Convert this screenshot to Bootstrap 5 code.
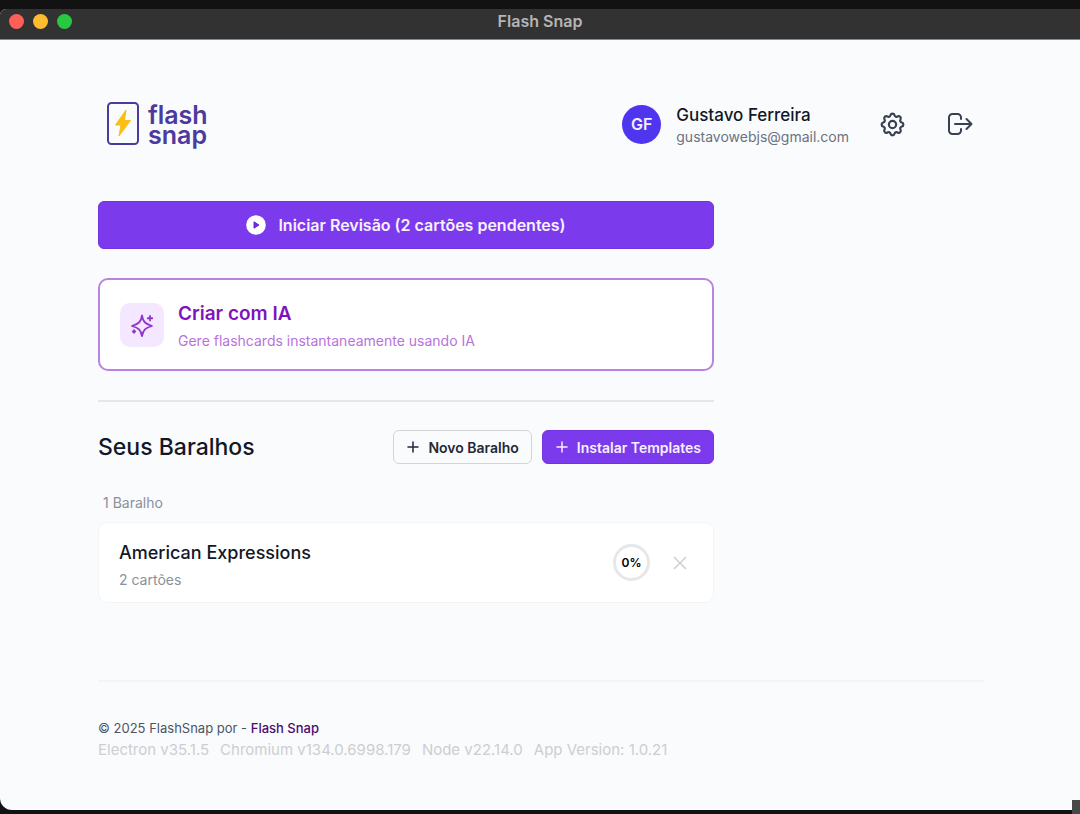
<!DOCTYPE html>
<html lang="pt-BR">
<head>
<meta charset="utf-8">
<meta name="viewport" content="width=device-width, initial-scale=1">
<title>Flash Snap</title>
<link href="https://cdn.jsdelivr.net/npm/bootstrap@5.3.0/dist/css/bootstrap.min.css" rel="stylesheet">
<style>
  :root { --violet: #7c3aed; --ink: #111827; }
  body { font-family: Inter, "Liberation Sans", sans-serif; font-size: 14px; line-height: 22px; color: var(--ink); background: #121212; }
  svg { display: block; flex: none; }
  .app-window { margin: 9px 0 4px; min-height: calc(100vh - 13px); background: #fafbfd; border-radius: 6px 0 0 12px; overflow: hidden; }
  .title-bar { height: 31px; background: #323232; border-bottom: 1px solid #8a8a8a; color: #b5b5b5; padding: 0 9px; display: grid; grid-template-columns: 1fr auto 1fr; align-items: center; }
  .title-text { font-size: 16px; font-weight: 600; line-height: 20px; padding-bottom: 6px; }
  .lights { gap: 9px; padding-bottom: 5px; }
  .light { width: 15px; height: 15px; border-radius: 50%; }
  .light-red { background: #ff5f57; } .light-amber { background: #febc2e; } .light-green { background: #28c840; }
  .desktop-corner { position: fixed; right: 0; bottom: 0; width: 8px; height: 14px; background: #484848; }
  .page { padding: 51px 96px 49px 98px; }
  .top-bar { height: 66px; padding: 0 4px 0 9px; }
  .brand { color: #4c3a9e; gap: 9px; text-decoration: none; }
  .brand-text { font-size: 25px; font-weight: 600; line-height: 20px; padding-top: 2px; }
  .avatar { width: 39px; height: 39px; background: #4f35f0; color: #f3efff; font-size: 16px; font-weight: 600; }
  .user-info { margin-left: 15px; padding-top: 4px; }
  .user-name { font-size: 17px; font-weight: 500; }
  .muted { color: #6b7280; }
  .icon-btn { width: 41px; height: 41px; border: 0; background: none; padding: 0; color: #374151; display: flex; align-items: center; justify-content: center; }
  .actions { margin-left: 23px; gap: 26px; }
  .main-col { max-width: 616px; margin-top: 44px; }
  .btn-violet { --bs-btn-bg: var(--violet); --bs-btn-color: #f7f0ff; --bs-btn-border-color: #7433dc; --bs-btn-hover-bg: #6d28d9; --bs-btn-hover-color: #fff; --bs-btn-active-bg: #6d28d9; --bs-btn-active-color: #fff; }
  .btn-start { height: 48px; font-size: 16px; font-weight: 600; gap: 12px; border-radius: 6px; }
  .ai-card { margin-top: 29px; width: 100%; height: 93px; background: #fff; border: 2px solid #b983e3; border-radius: 10px; padding: 0 20px; gap: 14px; text-align: left; }
  .ai-icon { width: 44px; height: 44px; border-radius: 10px; background: #f3e8ff; color: #9333ce; }
  .ai-text { padding-top: 4px; }
  .ai-title { font-size: 19px; font-weight: 600; line-height: 26px; color: #7e14bd; }
  .ai-sub { color: #b873da; margin-top: 3px; }
  .rule { border: 0; border-top: 2px solid #e5e7eb; opacity: 1; margin: 29px 0 28px; }
  .section-title { font-size: 23px; font-weight: 500; line-height: 34px; margin: 0; }
  .deck-actions { gap: 10px; }
  .btn-deck { height: 34px; padding: 0 12px; font-size: 14px; font-weight: 600; gap: 8px; border-radius: 6px; }
  .btn-plain { --bs-btn-color: #1f2937; --bs-btn-border-color: #d1d5db; --bs-btn-hover-bg: #f3f4f6; --bs-btn-hover-color: #1f2937; --bs-btn-hover-border-color: #d1d5db; }
  .deck-count { color: #8b909b; margin: 28px 0 8px 5px; }
  .deck { height: 81px; background: #fff; border: 1px solid #f3f4f6; border-radius: 9px; padding: 0 19px 0 20px; }
  .deck-text { padding-top: 6px; }
  .deck-name { font-size: 18px; font-weight: 500; line-height: 26px; margin: 0; }
  .deck-cards { color: #8b909b; margin-top: 3px; }
  .ring { width: 37px; height: 37px; border: 3px solid #e5e7eb; color: #000; font-size: 12px; font-weight: 600; }
  .deck-close { width: 29px; height: 29px; color: #cdd0d5; margin-left: 15px; }
  .page-foot { margin-top: 77px; border-top: 2px solid #f3f4f6; padding-top: 35px; }
  .copyright { font-size: 13px; color: #4b5563; }
  .copyright a { color: #4a0d70; font-weight: 500; text-decoration: none; }
  .versions { font-size: 15px; color: #cdced1; gap: 0 11px; }
</style>
</head>
<body>
<div class="app-window">
  <header class="title-bar">
    <div class="lights d-flex"><span class="light light-red"></span><span class="light light-amber"></span><span class="light light-green"></span></div>
    <div class="title-text">Flash Snap</div>
  </header>
  <div class="page">
    <nav class="top-bar d-flex align-items-center justify-content-between">
      <a href="#" class="brand d-flex align-items-center">
        <svg width="32" height="44" viewBox="0 0 32 44"><rect x="1" y="1" width="30" height="41" rx="3.500" fill="none" stroke="#4c3a9e" stroke-width="2"/><path d="M19 8 8.500 23H14l-2 11L23.500 18.500H17.500Z" fill="#fbbf15" stroke="#fbbf15" stroke-linejoin="round"/></svg>
        <span class="brand-text">flash<br>snap</span>
      </a>
      <div class="d-flex align-items-center">
        <div class="avatar rounded-circle d-flex align-items-center justify-content-center">GF</div>
        <div class="user-info">
          <div class="user-name">Gustavo Ferreira</div>
          <div class="muted">gustavowebjs@gmail.com</div>
        </div>
        <div class="actions d-flex">
          <button class="icon-btn" type="button" aria-label="Configurações">
            <svg width="29" height="29" viewBox="0 0 24 24" fill="none" stroke="currentColor" stroke-width="1.800" stroke-linejoin="round"><path d="M10.325 4.317c.426-1.756 2.924-1.756 3.350 0a1.724 1.724 0 0 0 2.573 1.066c1.543-.940 3.310.826 2.370 2.370a1.724 1.724 0 0 0 1.065 2.572c1.756.426 1.756 2.924 0 3.350a1.724 1.724 0 0 0-1.066 2.573c.940 1.543-.826 3.310-2.370 2.370a1.724 1.724 0 0 0-2.572 1.065c-.426 1.756-2.924 1.756-3.350 0a1.724 1.724 0 0 0-2.573-1.066c-1.543.940-3.310-.826-2.370-2.370a1.724 1.724 0 0 0-1.065-2.572c-1.756-.426-1.756-2.924 0-3.350a1.724 1.724 0 0 0 1.066-2.573c-.940-1.543.826-3.310 2.370-2.370 1 .608 2.296.070 2.572-1.065z"/><circle cx="12" cy="12" r="3"/></svg>
          </button>
          <button class="icon-btn" type="button" aria-label="Sair">
            <svg width="26" height="24" viewBox="0 0 26 24" fill="none" stroke="currentColor" stroke-width="2" stroke-linecap="round" stroke-linejoin="round"><path d="M14 7V5.500A3.500 3.500 0 0 0 10.500 2h-5A3.500 3.500 0 0 0 2 5.500v13A3.500 3.500 0 0 0 5.500 22h5a3.500 3.500 0 0 0 3.500-3.500V17M8 12h16.500M19.500 7l5 5-5 5"/></svg>
          </button>
        </div>
      </div>
    </nav>

    <main class="main-col">
      <button type="button" class="btn btn-violet btn-start w-100 d-flex align-items-center justify-content-center">
        <svg width="20" height="20" viewBox="0 0 20 20"><circle cx="10" cy="10" r="9.800" fill="#fff"/><path d="M8 6.800v6.400l5-3.200z" fill="#6d28d9" stroke="#6d28d9" stroke-linejoin="round"/></svg>
        <span>Iniciar Revisão (2 cartões pendentes)</span>
      </button>

      <button type="button" class="ai-card d-flex align-items-center">
        <span class="ai-icon d-flex align-items-center justify-content-center">
          <svg width="26" height="26" viewBox="0 0 26 26" fill="none" stroke="currentColor" stroke-width="1.800" stroke-linecap="round" stroke-linejoin="round"><path d="M13 3.500C14 10 16 11.500 23 14 16 16 14.500 17.500 13 24 11.500 17.500 10 16 3 14 10 11.500 12 10 13 3.500ZM21 4v4.500M18.750 6.250h4.500M5 18.250v2.500M3.750 19.500h2.500"/></svg>
        </span>
        <span class="ai-text">
          <span class="ai-title d-block">Criar com IA</span>
          <span class="ai-sub d-block">Gere flashcards instantaneamente usando IA</span>
        </span>
      </button>

      <hr class="rule">

      <div class="d-flex align-items-center justify-content-between">
        <h2 class="section-title">Seus Baralhos</h2>
        <div class="d-flex deck-actions">
          <button type="button" class="btn btn-plain btn-deck d-flex align-items-center">
            <svg width="14" height="14" viewBox="0 0 14 14" stroke="currentColor" stroke-width="1.500" stroke-linecap="round"><path d="M7 2v10M2 7h10"/></svg>Novo Baralho</button>
          <button type="button" class="btn btn-violet btn-deck d-flex align-items-center">
            <svg width="14" height="14" viewBox="0 0 14 14" stroke="currentColor" stroke-width="1.500" stroke-linecap="round"><path d="M7 2v10M2 7h10"/></svg>Instalar Templates</button>
        </div>
      </div>

      <div class="deck-count">1 Baralho</div>
      <article class="deck d-flex align-items-center">
        <div class="deck-text flex-grow-1">
          <h3 class="deck-name">American Expressions</h3>
          <div class="deck-cards">2 cartões</div>
        </div>
        <div class="ring rounded-circle d-flex align-items-center justify-content-center">0%</div>
        <button type="button" class="icon-btn deck-close" aria-label="Remover baralho">
          <svg width="14" height="14" viewBox="0 0 14 14" stroke="currentColor" stroke-width="1.600" stroke-linecap="round"><path d="m1.500 1.500 11 11M12.500 1.500l-11 11"/></svg>
        </button>
      </article>
    </main>

    <footer class="page-foot">
      <div class="copyright">© 2025 FlashSnap por - <a href="#">Flash Snap</a></div>
      <div class="versions d-flex flex-wrap"><span>Electron v35.1.5</span><span>Chromium v134.0.6998.179</span><span>Node v22.14.0</span><span>App Version: 1.0.21</span></div>
    </footer>
  </div>
</div>
<div class="desktop-corner"></div>
<script src="https://cdn.jsdelivr.net/npm/bootstrap@5.3.0/dist/js/bootstrap.bundle.min.js"></script>
</body>
</html>
